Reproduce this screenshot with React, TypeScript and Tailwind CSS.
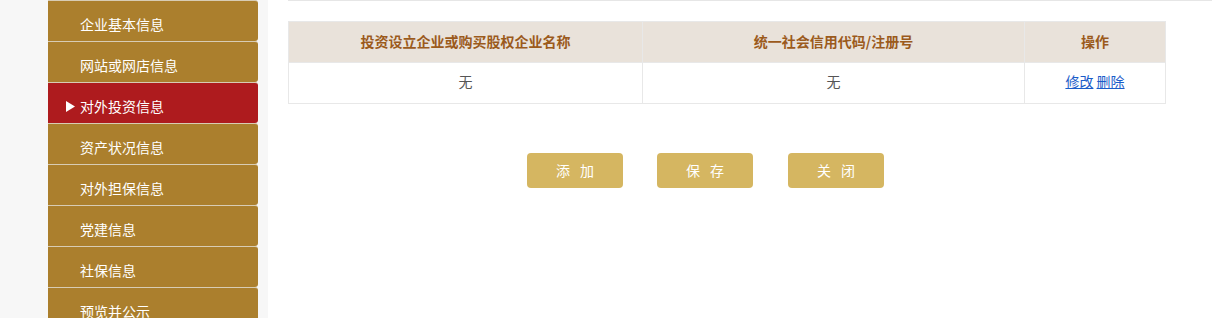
import React from "react";

const items = [
  "企业基本信息",
  "网站或网店信息",
  "对外投资信息",
  "资产状况信息",
  "对外担保信息",
  "党建信息",
  "社保信息",
  "预览并公示",
];

export default function App() {
  return (
    <div
      className="flex w-[1212px] h-[318px] overflow-hidden bg-white"
      style={{ fontFamily: '"Noto Sans CJK SC", "Noto Sans", sans-serif' }}
    >
      <div className="w-[268px] shrink-0 bg-[#f7f7f7] pl-[48px] h-full">
        <div className="w-[210px] flex flex-col">
          {items.map((t, i) => {
            const active = i === 2;
            return (
              <div
                key={t}
                className={`h-[41px] shrink-0 border-t border-[#d8ccb4] rounded-tr-[3px] rounded-br-[3px] flex items-center pl-[18px] pt-[6px] text-[14px] text-white ${
                  active ? "bg-[#ae1b1e]" : "bg-[#ab7f2d]"
                }`}
              >
                <span className="w-[14px] flex items-center">
                  {active && (
                    <svg width="9" height="11" viewBox="0 0 9 11">
                      <path d="M0 0 L9 5.5 L0 11 Z" fill="#ffffff" />
                    </svg>
                  )}
                </span>
                <span className="leading-none">{t}</span>
              </div>
            );
          })}
        </div>
      </div>
      <div className="flex-1 pl-[20px]">
        <div className="h-[1px] bg-[#e6e6e6]" />
        <div className="pt-[20px]">
          <table className="w-[878px] border-collapse text-[14px]">
            <thead>
              <tr className="bg-[#e9e2da] h-[41px]">
                <th className="w-[354px] border border-[#e8e8e8] font-bold text-[#9b5a1c] pb-[2px]">
                  投资设立企业或购买股权企业名称
                </th>
                <th className="w-[382px] border border-[#e8e8e8] font-bold text-[#9b5a1c] pb-[2px]">
                  统一社会信用代码/注册号
                </th>
                <th className="border border-[#e8e8e8] font-bold text-[#9b5a1c] pb-[2px]">
                  操作
                </th>
              </tr>
            </thead>
            <tbody>
              <tr className="h-[41px]">
                <td className="border border-[#e8e8e8] text-center text-[#555] pb-[3px]">无</td>
                <td className="border border-[#e8e8e8] text-center text-[#555] pb-[3px]">无</td>
                <td className="border border-[#e8e8e8] text-center pb-[3px]">
                  <a className="text-[#1a5cc9] underline cursor-pointer">修改</a>{" "}
                  <a className="text-[#1a5cc9] underline cursor-pointer">删除</a>
                </td>
              </tr>
            </tbody>
          </table>
          <div className="flex mt-[49px] pl-[239px]">
            <button className="w-[96px] h-[35px] rounded-[4px] bg-[#d5b661] text-white text-[14px] tracking-[10px] pl-[10px]">
              添加
            </button>
            <button className="ml-[34px] w-[96px] h-[35px] rounded-[4px] bg-[#d5b661] text-white text-[14px] tracking-[10px] pl-[10px]">
              保存
            </button>
            <button className="ml-[35px] w-[96px] h-[35px] rounded-[4px] bg-[#d5b661] text-white text-[14px] tracking-[10px] pl-[10px]">
              关闭
            </button>
          </div>
        </div>
      </div>
    </div>
  );
}
